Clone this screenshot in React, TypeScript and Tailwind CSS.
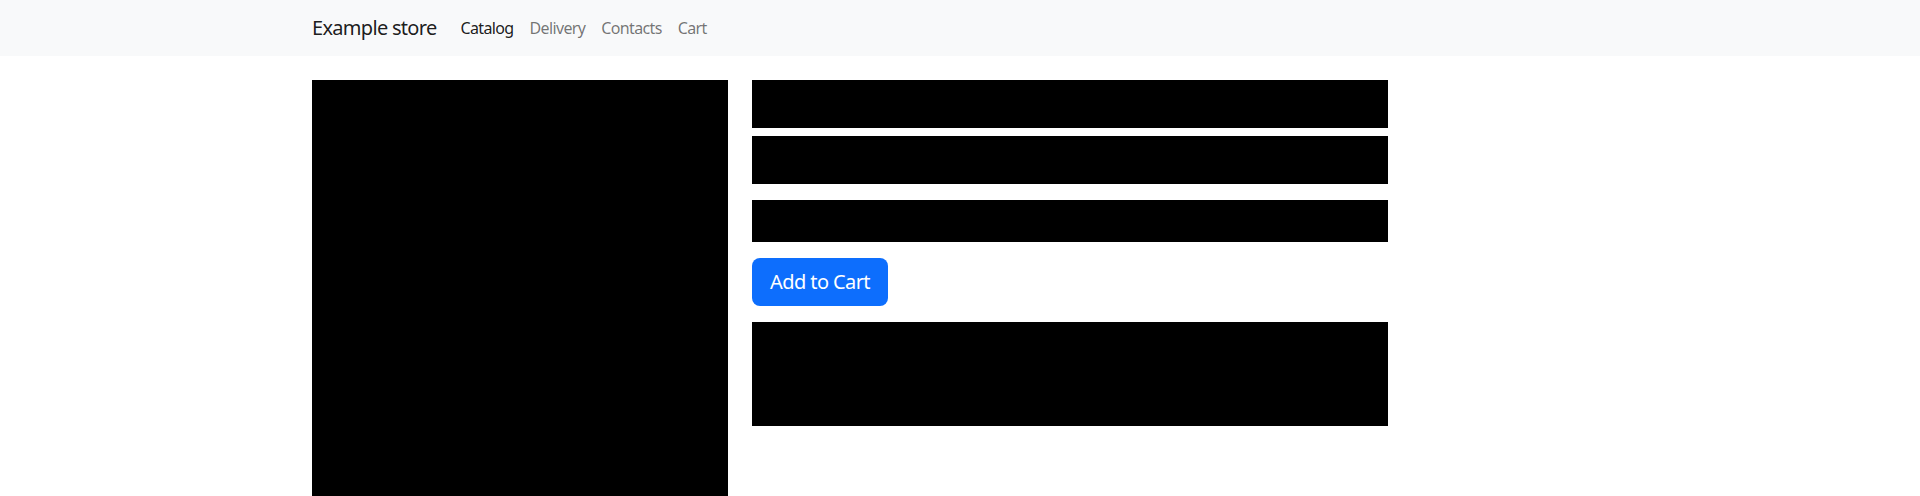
import React from 'react';

const links = [
  { label: 'Catalog', active: true },
  { label: 'Delivery', active: false },
  { label: 'Contacts', active: false },
  { label: 'Cart', active: false },
];

export default function App() {
  return (
    <div className="min-h-screen bg-white text-[#212529] font-['Noto_Sans',sans-serif]">
      <nav className="bg-[#f8f9fa] h-[56px]">
        <div className="w-[1320px] mx-auto px-3 h-full flex items-center">
          <a className="text-[20px] mr-4 text-black/90 tracking-[-0.035em]">Example store</a>
          <ul className="flex">
            {links.map(l => (
              <li key={l.label}>
                <a className={`px-2 text-base tracking-[-0.04em] ${l.active ? 'text-black/90' : 'text-black/55'}`}>{l.label}</a>
              </li>
            ))}
          </ul>
        </div>
      </nav>

      <main className="w-[1320px] mx-auto px-3 pt-6 flex gap-6">
        <div className="w-[416px] h-[416px] bg-black shrink-0" />
        <div className="w-[636px] flex flex-col">
          <div className="h-12 bg-black" />
          <div className="h-12 bg-black mt-2" />
          <div className="h-[42px] bg-black mt-4" />
          <div className="mt-4">
            <button className="h-12 w-[136px] rounded-lg bg-[#0d6efd] text-white text-[20px] tracking-[-0.03em]">Add to Cart</button>
          </div>
          <div className="h-[104px] bg-black mt-4" />
        </div>
      </main>
    </div>
  );
}
